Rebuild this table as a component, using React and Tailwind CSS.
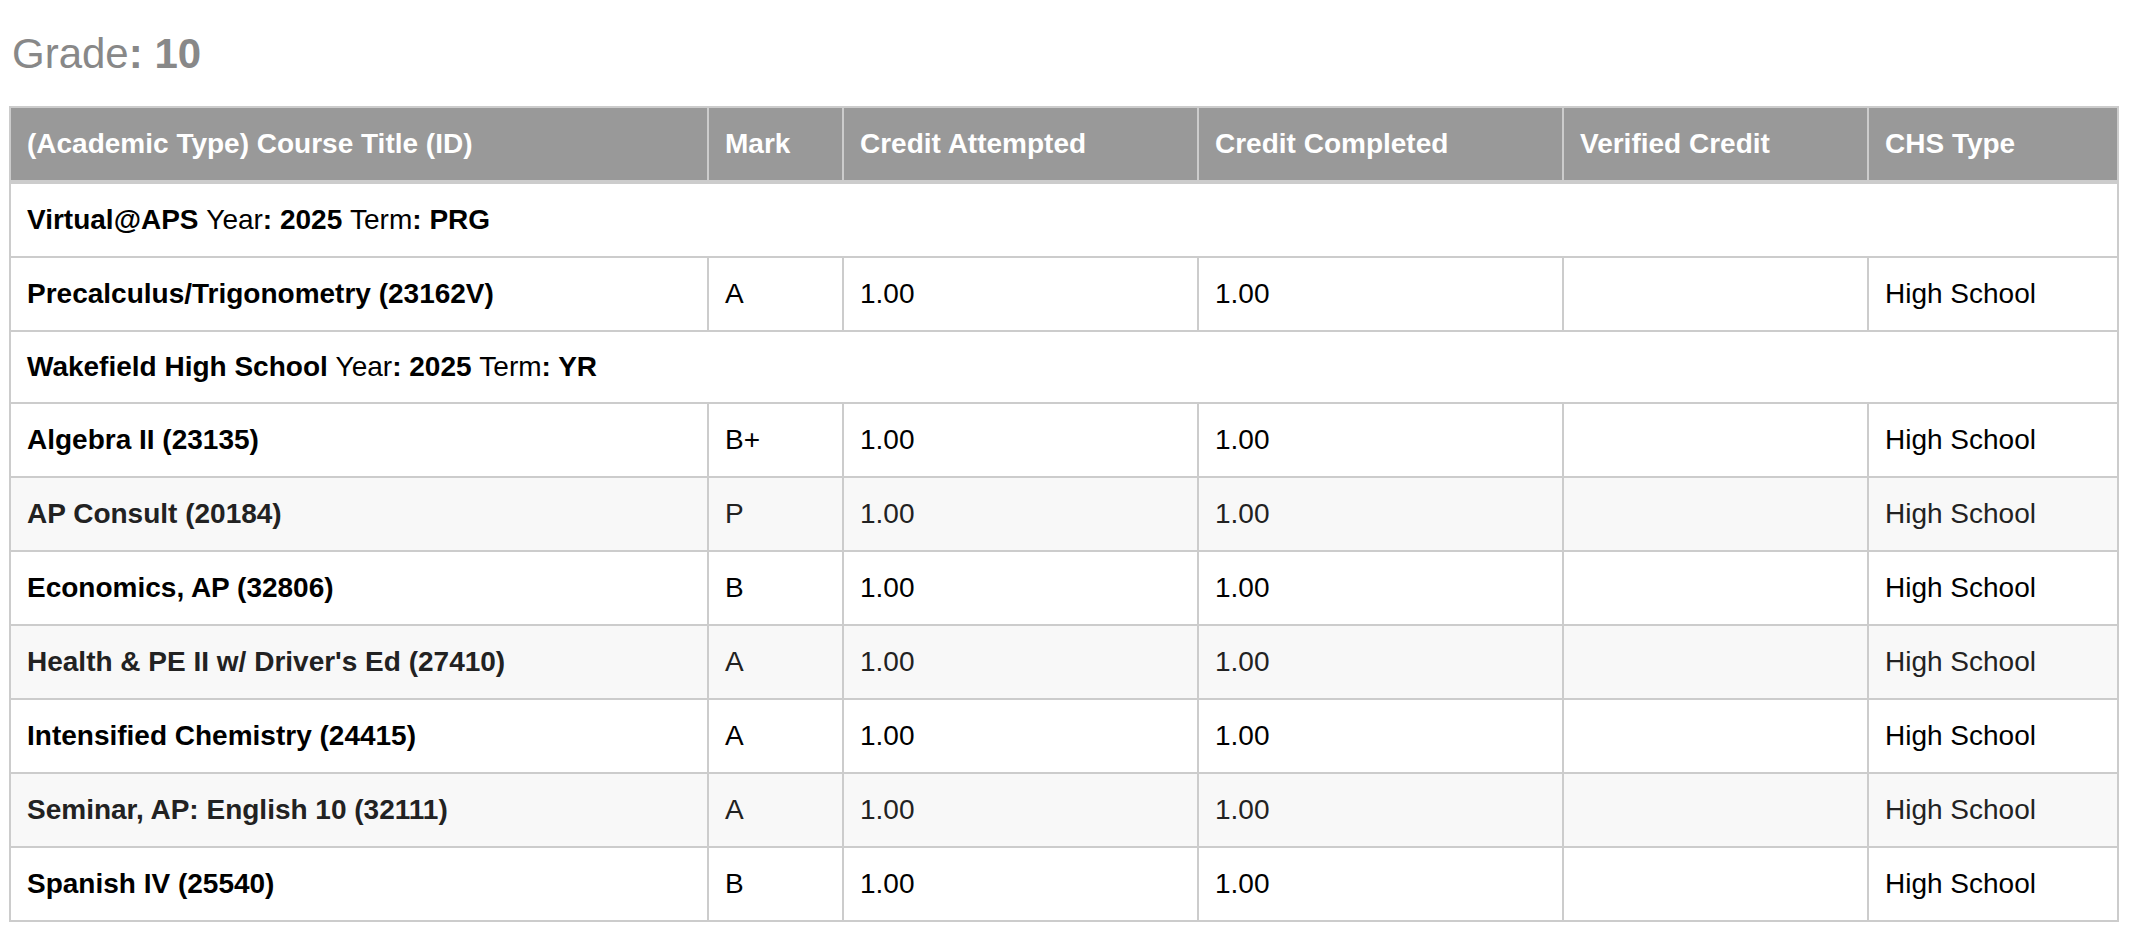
import React from 'react';

const cols = 'grid grid-cols-[696px_135px_355px_365px_305px_250px]';

const headers = ['(Academic Type) Course Title (ID)', 'Mark', 'Credit Attempted', 'Credit Completed', 'Verified Credit', 'CHS Type'];

const groups = [
  {
    school: 'Virtual@APS', year: '2025', term: 'PRG',
    courses: [
      { title: 'Precalculus/Trigonometry (23162V)', mark: 'A' },
    ],
  },
  {
    school: 'Wakefield High School', year: '2025', term: 'YR',
    courses: [
      { title: 'Algebra II (23135)', mark: 'B+' },
      { title: 'AP Consult (20184)', mark: 'P', striped: true },
      { title: 'Economics, AP (32806)', mark: 'B' },
      { title: "Health & PE II w/ Driver's Ed (27410)", mark: 'A', striped: true },
      { title: 'Intensified Chemistry (24415)', mark: 'A' },
      { title: 'Seminar, AP: English 10 (32111)', mark: 'A', striped: true },
      { title: 'Spanish IV (25540)', mark: 'B' },
    ],
  },
];

function Cell({ children, first, bold }) {
  return (
    <div className={`h-[72px] flex items-center px-4 ${first ? '' : 'border-l-2 border-[#ccc]'} ${bold ? 'font-bold' : ''}`}>
      {children}
    </div>
  );
}

export default function App() {
  return (
    <div className="bg-white min-h-screen text-[28px] text-black" style={{ fontFamily: '"Liberation Sans", Arial, sans-serif' }}>
      <h2 className="pt-[30px] pl-[12px] text-[42px] leading-[48px] text-[#888] font-normal">
        Grade<b>: 10</b>
      </h2>

      <div className="mt-[28px] ml-[9px] w-[2110px] border-2 border-[#ccc]">
        {/* header */}
        <div className={`${cols} bg-[#999] text-white font-bold border-b-4 border-[#ccc]`}>
          {headers.map((h, i) => (
            <Cell key={h} first={i === 0}>{h}</Cell>
          ))}
        </div>

        {groups.map((g, gi) => (
          <React.Fragment key={g.school}>
            <div className={`h-[72px] flex items-center px-4 bg-white ${gi > 0 ? 'border-t-2 border-[#ccc]' : ''}`}>
              <b>{g.school}</b>&nbsp;Year<b>: {g.year}</b>&nbsp;Term<b>: {g.term}</b>
            </div>
            {g.courses.map(c => (
              <div key={c.title}
                className={`${cols} border-t-2 border-[#ccc] ${c.striped ? 'bg-[#f8f8f8] text-[#222]' : 'bg-white'}`}>
                <Cell first bold>{c.title}</Cell>
                <Cell>{c.mark}</Cell>
                <Cell>1.00</Cell>
                <Cell>1.00</Cell>
                <Cell></Cell>
                <Cell>High School</Cell>
              </div>
            ))}
          </React.Fragment>
        ))}
      </div>
    </div>
  );
}
